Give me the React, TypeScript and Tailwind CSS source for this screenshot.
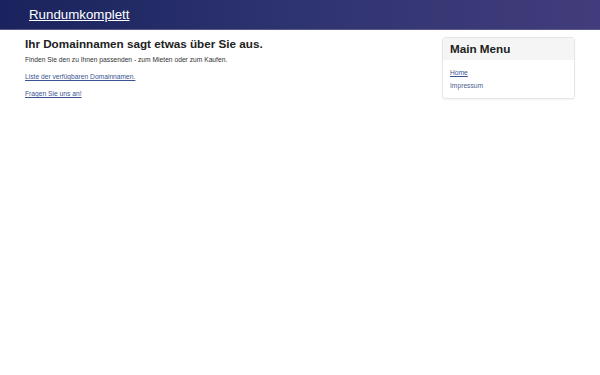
export default function App() {
  return (
    <div className="min-h-[375px] bg-white" style={{ fontFamily: '"Liberation Sans", Arial, sans-serif' }}>
      <div className="h-[30px] bg-gradient-to-r from-[#1a235d] via-[#2e3470] to-[#433c7c] border-b border-[#5a5a8a] flex items-center pl-[29px]">
        <a href="#" className="text-white underline text-[13.3px] leading-none">Rundumkomplett</a>
      </div>
      <div className="flex pl-[25px] pr-[25px] pt-[7px]">
        <div className="flex-1">
          <h1 className="text-[11.7px] font-bold text-[#222] leading-[14px] mt-[0px]">Ihr Domainnamen sagt etwas über Sie aus.</h1>
          <p className="text-[6.7px] text-[#333] mt-[4px] leading-[9px]">Finden Sie den zu Ihnen passenden - zum Mieten oder zum Kaufen.</p>
          <p className="text-[6.7px] leading-[9px] mt-[8px]"><a href="#" className="text-[#3a5590] underline">Liste der verfügbaren Domainnamen.</a></p>
          <p className="text-[6.7px] leading-[9px] mt-[8px]"><a href="#" className="text-[#3a5590] underline">Fragen Sie uns an!</a></p>
        </div>
        <div className="w-[133px] border border-[#e6e6e6] rounded-[3px] shadow-[0_1px_2px_rgba(0,0,0,0.05)]">
          <div className="h-[22px] bg-[#f5f5f5] flex items-center pl-[7px] text-[11.7px] font-bold text-[#222]">Main Menu</div>
          <div className="px-[7px] pt-[8px] pb-[8px] text-[6.7px] leading-[9px]">
            <div><a href="#" className="text-[#3a5590] underline">Home</a></div>
            <div className="mt-[4px]"><a href="#" className="text-[#4a5f90]">Impressum</a></div>
          </div>
        </div>
      </div>
    </div>
  );
}
